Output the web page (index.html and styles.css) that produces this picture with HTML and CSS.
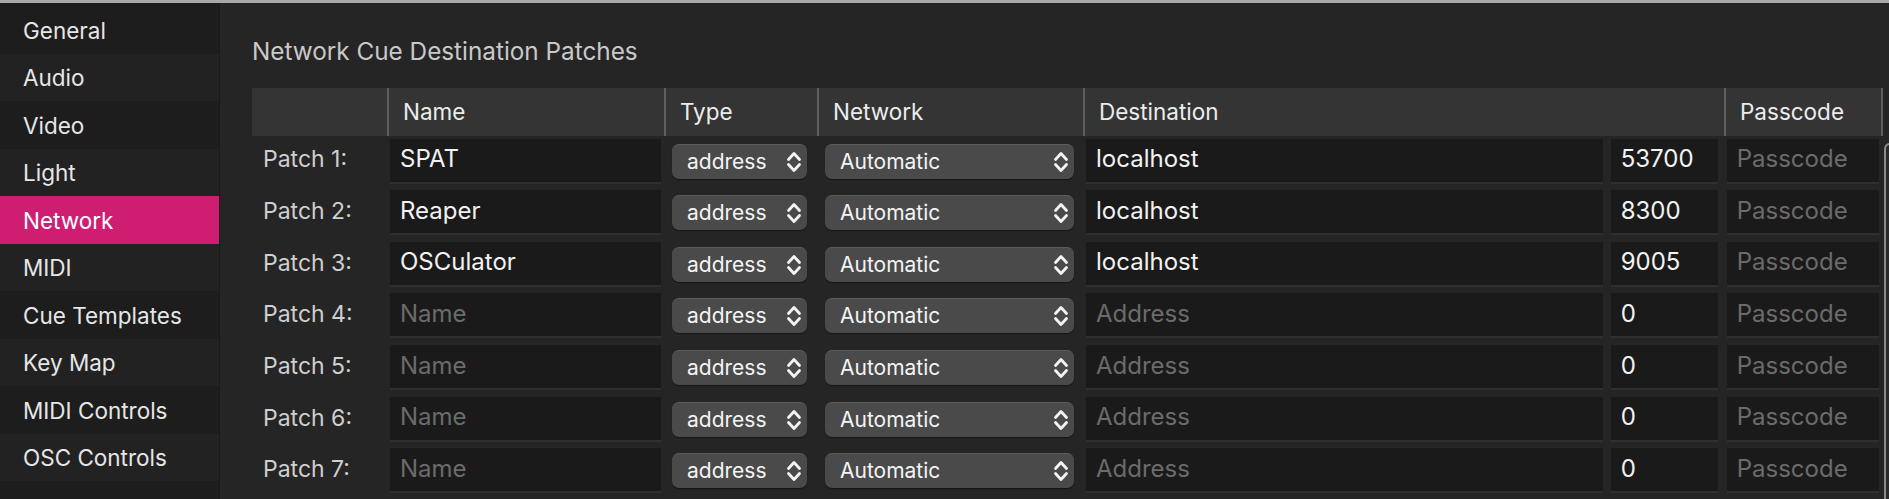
FILE: index.html
```html
<!DOCTYPE html>
<html lang="en">
<head>
<meta charset="utf-8">
<title>Network Cue Destination Patches</title>
<link rel="stylesheet" href="styles.css">
</head>
<body>
<div class="topline"></div>
<div class="window">
  <nav class="sidebar">
    <div class="nav-item">General</div>
    <div class="nav-item alt">Audio</div>
    <div class="nav-item">Video</div>
    <div class="nav-item alt">Light</div>
    <div class="nav-item active">Network</div>
    <div class="nav-item alt">MIDI</div>
    <div class="nav-item">Cue Templates</div>
    <div class="nav-item alt">Key Map</div>
    <div class="nav-item">MIDI Controls</div>
    <div class="nav-item alt">OSC Controls</div>
    <div class="nav-fill"></div>
  </nav>
  <main class="content">
    <h1 class="title">Network Cue Destination Patches</h1>
    <div class="table">
      <div class="th th-blank"></div>
      <div class="th">Name</div>
      <div class="th">Type</div>
      <div class="th">Network</div>
      <div class="th">Destination</div>
      <div class="th th-last">Passcode</div>

      <div class="label">Patch 1:</div>
      <div class="cell c-name"><div class="field">SPAT</div></div>
      <div class="cell c-type"><div class="popup popup-type"><span>address</span><svg class="chev" viewBox="0 0 16 26"><path d="M2.5 10.5 L8 4.5 L13.5 10.5 M2.5 15.5 L8 21.5 L13.5 15.5"/></svg></div></div>
      <div class="cell c-net"><div class="popup popup-net"><span>Automatic</span><svg class="chev" viewBox="0 0 16 26"><path d="M2.5 10.5 L8 4.5 L13.5 10.5 M2.5 15.5 L8 21.5 L13.5 15.5"/></svg></div></div>
      <div class="cell c-dest"><div class="field dest">localhost</div><div class="field port">53700</div></div>
      <div class="cell c-pass"><div class="field placeholder">Passcode</div></div>

      <div class="label">Patch 2:</div>
      <div class="cell c-name"><div class="field">Reaper</div></div>
      <div class="cell c-type"><div class="popup popup-type"><span>address</span><svg class="chev" viewBox="0 0 16 26"><path d="M2.5 10.5 L8 4.5 L13.5 10.5 M2.5 15.5 L8 21.5 L13.5 15.5"/></svg></div></div>
      <div class="cell c-net"><div class="popup popup-net"><span>Automatic</span><svg class="chev" viewBox="0 0 16 26"><path d="M2.5 10.5 L8 4.5 L13.5 10.5 M2.5 15.5 L8 21.5 L13.5 15.5"/></svg></div></div>
      <div class="cell c-dest"><div class="field dest">localhost</div><div class="field port">8300</div></div>
      <div class="cell c-pass"><div class="field placeholder">Passcode</div></div>

      <div class="label">Patch 3:</div>
      <div class="cell c-name"><div class="field">OSCulator</div></div>
      <div class="cell c-type"><div class="popup popup-type"><span>address</span><svg class="chev" viewBox="0 0 16 26"><path d="M2.5 10.5 L8 4.5 L13.5 10.5 M2.5 15.5 L8 21.5 L13.5 15.5"/></svg></div></div>
      <div class="cell c-net"><div class="popup popup-net"><span>Automatic</span><svg class="chev" viewBox="0 0 16 26"><path d="M2.5 10.5 L8 4.5 L13.5 10.5 M2.5 15.5 L8 21.5 L13.5 15.5"/></svg></div></div>
      <div class="cell c-dest"><div class="field dest">localhost</div><div class="field port">9005</div></div>
      <div class="cell c-pass"><div class="field placeholder">Passcode</div></div>

      <div class="label">Patch 4:</div>
      <div class="cell c-name"><div class="field placeholder">Name</div></div>
      <div class="cell c-type"><div class="popup popup-type"><span>address</span><svg class="chev" viewBox="0 0 16 26"><path d="M2.5 10.5 L8 4.5 L13.5 10.5 M2.5 15.5 L8 21.5 L13.5 15.5"/></svg></div></div>
      <div class="cell c-net"><div class="popup popup-net"><span>Automatic</span><svg class="chev" viewBox="0 0 16 26"><path d="M2.5 10.5 L8 4.5 L13.5 10.5 M2.5 15.5 L8 21.5 L13.5 15.5"/></svg></div></div>
      <div class="cell c-dest"><div class="field dest placeholder">Address</div><div class="field port">0</div></div>
      <div class="cell c-pass"><div class="field placeholder">Passcode</div></div>

      <div class="label">Patch 5:</div>
      <div class="cell c-name"><div class="field placeholder">Name</div></div>
      <div class="cell c-type"><div class="popup popup-type"><span>address</span><svg class="chev" viewBox="0 0 16 26"><path d="M2.5 10.5 L8 4.5 L13.5 10.5 M2.5 15.5 L8 21.5 L13.5 15.5"/></svg></div></div>
      <div class="cell c-net"><div class="popup popup-net"><span>Automatic</span><svg class="chev" viewBox="0 0 16 26"><path d="M2.5 10.5 L8 4.5 L13.5 10.5 M2.5 15.5 L8 21.5 L13.5 15.5"/></svg></div></div>
      <div class="cell c-dest"><div class="field dest placeholder">Address</div><div class="field port">0</div></div>
      <div class="cell c-pass"><div class="field placeholder">Passcode</div></div>

      <div class="label">Patch 6:</div>
      <div class="cell c-name"><div class="field placeholder">Name</div></div>
      <div class="cell c-type"><div class="popup popup-type"><span>address</span><svg class="chev" viewBox="0 0 16 26"><path d="M2.5 10.5 L8 4.5 L13.5 10.5 M2.5 15.5 L8 21.5 L13.5 15.5"/></svg></div></div>
      <div class="cell c-net"><div class="popup popup-net"><span>Automatic</span><svg class="chev" viewBox="0 0 16 26"><path d="M2.5 10.5 L8 4.5 L13.5 10.5 M2.5 15.5 L8 21.5 L13.5 15.5"/></svg></div></div>
      <div class="cell c-dest"><div class="field dest placeholder">Address</div><div class="field port">0</div></div>
      <div class="cell c-pass"><div class="field placeholder">Passcode</div></div>

      <div class="label">Patch 7:</div>
      <div class="cell c-name"><div class="field placeholder">Name</div></div>
      <div class="cell c-type"><div class="popup popup-type"><span>address</span><svg class="chev" viewBox="0 0 16 26"><path d="M2.5 10.5 L8 4.5 L13.5 10.5 M2.5 15.5 L8 21.5 L13.5 15.5"/></svg></div></div>
      <div class="cell c-net"><div class="popup popup-net"><span>Automatic</span><svg class="chev" viewBox="0 0 16 26"><path d="M2.5 10.5 L8 4.5 L13.5 10.5 M2.5 15.5 L8 21.5 L13.5 15.5"/></svg></div></div>
      <div class="cell c-dest"><div class="field dest placeholder">Address</div><div class="field port">0</div></div>
      <div class="cell c-pass"><div class="field placeholder">Passcode</div></div>
    </div>
    <div class="scroller"></div>
  </main>
</div>
</body>
</html>
```

FILE: styles.css
```css
* { box-sizing: border-box; }
html, body {
  margin: 0;
  padding: 0;
  background: #252525;
  width: 1889px;
  height: 499px;
  overflow: hidden;
  font-family: Inter, "Liberation Sans", sans-serif;
  -webkit-font-smoothing: antialiased;
}
.topline {
  height: 3px;
  background: #a9a9a9;
}
.window {
  display: flex;
  height: 496px;
  overflow: hidden;
}
.sidebar {
  width: 220px;
  flex: none;
  display: flex;
  flex-direction: column;
  background: #1d1d1d;
  padding-top: 3px;
  border-right: 1px solid #1a1a1a;
}
.nav-item {
  height: 47.5px;
  flex: none;
  display: flex;
  align-items: center;
  padding-left: 23px;
  padding-top: 1px;
  font-size: 22.5px;
  color: #e6e6e6;
  background: #1d1d1d;
}
.nav-item.alt { background: #222222; }
.nav-item.active { background: #cf1e72; color: #ffffff; }
.nav-fill { flex: 1; background: #1d1d1d; }

.content {
  flex: 1;
  position: relative;
  padding-left: 32px;
  overflow: hidden;
}
.title {
  margin: 0;
  height: 85px;
  padding-top: 33px;
  font-size: 24.3px;
  font-weight: 400;
  line-height: 30px;
  color: #c9c9c9;
}
.table {
  display: grid;
  grid-template-columns: 135px 277px 153px 266px 641px 159px;
  grid-auto-rows: 51.67px;
  grid-template-rows: 48px;
}
.th {
  background: #343434;
  border-left: 2px solid #5f5f5f;
  padding-left: 14px;
  padding-bottom: 2px;
  display: flex;
  align-items: center;
  font-size: 22.5px;
  color: #ececec;
}
.th-blank { border-left: none; }
.th-last { border-right: 2px solid #5f5f5f; }
.label {
  display: flex;
  align-items: center;
  padding-left: 11px;
  padding-bottom: 5px;
  font-size: 23px;
  color: #cfcfcf;
}
.cell {
  display: flex;
  align-items: flex-start;
  padding-top: 2.5px;
}
.field {
  height: 45px;
  background: #1b1a1a;
  border-bottom: 2px solid #2f2f2f;
  display: flex;
  align-items: center;
  padding-left: 10px;
  padding-bottom: 3px;
  font-size: 24px;
  color: #f2f2f2;
  white-space: nowrap;
}
.field.placeholder { color: #6b6b6b; }
.c-name { padding-left: 3px; }
.c-name .field { width: 270.7px; }
.c-dest { padding-left: 3px; gap: 8px; }
.c-dest .dest { width: 516.7px; }
.c-dest .port { width: 107.6px; }
.c-pass { padding-left: 2.7px; }
.c-pass .field { width: 152.3px; }

.c-type, .c-net { padding-left: 8px; padding-top: 7.5px; }
.popup {
  height: 35px;
  border-radius: 7px;
  background: #4a4a4a;
  border-top: 1px solid #5c5c5c;
  box-shadow: 0 1px 1px rgba(0,0,0,0.45);
  display: flex;
  align-items: center;
  padding-left: 15px;
  padding-right: 5px;
  font-size: 21px;
  color: #f4f4f4;
}
.popup span { flex: 1; padding-bottom: 1px; }
.popup-type { width: 135px; }
.popup-net { width: 249px; }
.chev {
  width: 16px;
  height: 26px;
  flex: none;
}
.chev path {
  fill: none;
  stroke: #f4f4f4;
  stroke-width: 2.8;
  stroke-linecap: round;
  stroke-linejoin: round;
}
.scroller {
  position: absolute;
  left: 1664px;
  top: 140px;
  width: 6px;
  height: 360px;
  border-left: 2px solid #8c8c8c;
  border-top: 2px solid #8c8c8c;
  border-top-left-radius: 6px;
  background: #2a2a2a;
}
```
